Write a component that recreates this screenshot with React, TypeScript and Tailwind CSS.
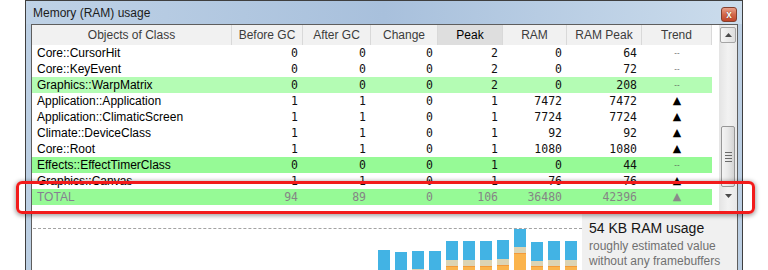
import React from 'react';

interface Row {
    name: string;
    vals: string[];
    trend: 'up' | 'flat';
    tone?: 'light' | 'green' | 'total';
}

const COLS = [
    { label: 'Objects of Class', w: 'w-[200px]' },
    { label: 'Before GC', w: 'w-[71px]' },
    { label: 'After GC', w: 'w-[68px]' },
    { label: 'Change', w: 'w-[67px]' },
    { label: 'Peak', w: 'w-[65px]' },
    { label: 'RAM', w: 'w-[64px]' },
    { label: 'RAM Peak', w: 'w-[75px]' },
    { label: 'Trend', w: 'w-[70px]' },
];

const ROWS: Row[] = [
    { name: 'Core::CursorHit', vals: ['0', '0', '0', '2', '0', '64'], trend: 'flat' },
    { name: 'Core::KeyEvent', vals: ['0', '0', '0', '2', '0', '72'], trend: 'flat' },
    { name: 'Graphics::WarpMatrix', vals: ['0', '0', '0', '2', '0', '208'], trend: 'flat', tone: 'light' },
    { name: 'Application::Application', vals: ['1', '1', '0', '1', '7472', '7472'], trend: 'up' },
    { name: 'Application::ClimaticScreen', vals: ['1', '1', '0', '1', '7724', '7724'], trend: 'up' },
    { name: 'Climate::DeviceClass', vals: ['1', '1', '0', '1', '92', '92'], trend: 'up' },
    { name: 'Core::Root', vals: ['1', '1', '0', '1', '1080', '1080'], trend: 'up' },
    { name: 'Effects::EffectTimerClass', vals: ['0', '0', '0', '1', '0', '44'], trend: 'flat', tone: 'green' },
    { name: 'Graphics::Canvas', vals: ['1', '1', '0', '1', '76', '76'], trend: 'up' },
    { name: 'TOTAL', vals: ['94', '89', '0', '106', '36480', '42396'], trend: 'up', tone: 'total' },
];

// top offset below the dashed line, then blue / beige heights (rest is orange)
const BARS = [
    { top: 21, blue: 40, beige: 0 },
    { top: 23, blue: 40, beige: 0 },
    { top: 22, blue: 18, beige: 20 },
    { top: 22, blue: 40, beige: 0 },
    { top: 12, blue: 19, beige: 6 },
    { top: 12, blue: 19, beige: 6 },
    { top: 12, blue: 19, beige: 6 },
    { top: 11, blue: 19, beige: 6 },
    { top: 0, blue: 18, beige: 6 },
    { top: 13, blue: 19, beige: 5 },
    { top: 12, blue: 19, beige: 6 },
    { top: 12, blue: 19, beige: 6 },
];

const sans = "font-['Liberation_Sans',Arial,sans-serif]";
const mono = "font-['DejaVu_Sans_Mono',monospace]";

function Arrow({ down }: { down?: boolean }) {
    return (
        <svg width="7" height="4" viewBox="0 0 7 4">
            <path d={down ? 'M0 0 L7 0 L3.5 4 Z' : 'M0 4 L7 4 L3.5 0 Z'} fill="#4a4a4a" />
        </svg>
    );
}

function Scrollbar() {
    return (
        <div className="flex h-[188px] w-[18px] flex-col items-center bg-gradient-to-r from-[#e4e4e4] via-[#f2f2f2] to-[#e8e8e8]">
            <div className="mt-[2px] flex h-[16px] w-[16px] items-center justify-center rounded-[2px] border border-[#a5a5a5] bg-gradient-to-r from-[#f6f6f6] to-[#dedede]">
                <Arrow />
            </div>
            <div className="mt-[83px] flex h-[61px] w-[14px] flex-col items-center justify-center gap-[2px] rounded-[2px] border border-[#979797] bg-gradient-to-r from-[#f4f4f4] via-[#e8e8e8] to-[#d4d4d4]">
                <div className="h-px w-[7px] bg-[#6a6a6a]" />
                <div className="h-px w-[7px] bg-[#6a6a6a]" />
                <div className="h-px w-[7px] bg-[#6a6a6a]" />
                <div className="h-px w-[7px] bg-[#6a6a6a]" />
            </div>
            <div className="mt-px flex h-[16px] w-[16px] items-center justify-center">
                <Arrow down />
            </div>
        </div>
    );
}

function TableRow({ row }: { row: Row }) {
    const bg =
        row.tone === 'light' ? 'bg-[#b4fcb4]' : row.tone === 'green' || row.tone === 'total' ? 'bg-[#96fa96]' : 'bg-white';
    const ink = row.tone === 'total' ? 'text-[#858585]' : 'text-[#111111]';
    return (
        <div className={`flex h-[16px] items-center ${bg}`}>
            <div className={`w-[200px] pl-[5px] text-[12px] leading-[16px] ${sans} ${row.tone === 'total' ? 'text-[#857f92]' : 'text-black'}`}>
                {row.name}
            </div>
            {row.vals.map((v, i) => (
                <div key={i} className={`${COLS[i + 1].w} pr-[5px] text-right text-[11.5px] leading-[16px] ${mono} ${ink}`}>
                    {v}
                </div>
            ))}
            <div className="flex w-[70px] items-center justify-center">
                {row.trend === 'up' ? (
                    <span className={`text-[11px] leading-[16px] font-['DejaVu_Sans',sans-serif] ${row.tone === 'total' ? 'text-[#8a8a8a]' : 'text-black'}`}>▲</span>
                ) : (
                    <span className={`text-[8px] leading-[16px] ${sans} text-[#555555]`}>--</span>
                )}
            </div>
        </div>
    );
}

export default function App() {
    return (
        <div className="relative h-[270px] w-[768px] overflow-hidden bg-white">
            <div className="ml-[25px] w-[718px] border-x border-t border-[#3f3f3f] bg-[#bccfe3]">
                {/* title bar */}
                <div className="flex h-[23px] items-start justify-between bg-gradient-to-r from-[#bfd2e6] via-[#a8c0dc] to-[#cbdcec] pl-[7px] pr-[5px]">
                    <span className={`mt-[4px] text-[12px] leading-[16px] text-[#1b1b1b] ${sans}`}>Memory (RAM) usage</span>
                    <div className="mt-[6px] flex h-[15px] w-[16px] items-center justify-center rounded-[3px] border border-[#83402e] bg-gradient-to-b from-[#e9a089] via-[#d2684b] to-[#c0452a]">
                        <span className={`text-[10px] font-bold leading-[10px] text-white ${sans} [text-shadow:0_0_1px_#4a1a10]`}>x</span>
                    </div>
                </div>

                {/* client area */}
                <div className="pl-[5px] pr-[4px]">
                    <div className="border border-[#5e5e5e] bg-white">
                        <div className="flex border-b border-[#b5b5b5]">
                            <div className="w-[680px]">
                                <div className="flex h-[20px]">
                                    {COLS.map((c) => (
                                        <div
                                            key={c.label}
                                            className={`${c.w} flex items-center justify-center border-r border-[#d9d9d9] text-[12px] ${sans} ${
                                                c.label === 'Peak' ? 'bg-[#dedede] text-black' : 'bg-[#f1f1f1] text-[#3c3c3c]'
                                            }`}
                                        >
                                            {c.label}
                                        </div>
                                    ))}
                                </div>
                                {ROWS.map((r) => (
                                    <TableRow key={r.name} row={r} />
                                ))}
                            </div>
                            <div className="w-[7px]" />
                            <Scrollbar />
                        </div>

                        {/* chart + summary */}
                        <div className="flex h-[70px]">
                            <div className="w-[550px] pt-[14px]">
                                <div className="ml-px border-t border-dashed border-[#a3a3a3]" />
                                <div className="flex gap-[5px] pl-[346px]">
                                    {BARS.map((b, i) => (
                                        <div key={i} className="flex w-[12px] flex-col" style={{ marginTop: b.top }}>
                                            <div className="bg-[#42b3e4]" style={{ height: b.blue }} />
                                            {b.beige > 0 && <div className="bg-[#dcd4b4]" style={{ height: b.beige }} />}
                                            {b.beige > 0 && b.blue < 40 && b.beige < 20 && <div className="h-px bg-[#f39a3a]" />}
                                            {b.beige > 0 && b.beige < 20 && <div className="h-[20px] bg-[#fbb44c]" />}
                                        </div>
                                    ))}
                                </div>
                            </div>
                            <div className={`flex-1 bg-[#f0f0f0] pl-[7px] pt-[5px] ${sans}`}>
                                <div className="text-[14px] leading-[18px] text-[#151515]">54 KB RAM usage</div>
                                <div className="mt-[2px] text-[12px] leading-[15px] text-[#707070]">roughly estimated value</div>
                                <div className="text-[12px] leading-[15px] text-[#707070]">without any framebuffers</div>
                            </div>
                        </div>
                    </div>
                </div>
            </div>

            {/* red highlight around the total row */}
            <div className="absolute left-[16px] top-[181px] h-[33px] w-[739px] rounded-[6px] border-[3px] border-[#f21b1b] shadow-[0_1px_4px_1px_rgba(0,0,0,0.35)]" />
        </div>
    );
}
